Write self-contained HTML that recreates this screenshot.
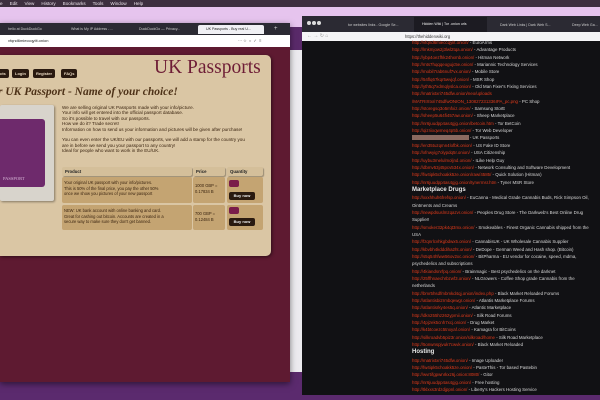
<!DOCTYPE html>
<html><head><meta charset="utf-8"><style>
*{margin:0;padding:0;box-sizing:border-box}
body{width:600px;height:400px;overflow:hidden;position:relative;background:#5a2a6a;font-family:"Liberation Sans",sans-serif}
.abs{position:absolute}
#menu{left:0;top:0;width:600px;height:7px;background:#3d2f3f;color:#e8e0e8;font-size:4.6px;line-height:7px;white-space:nowrap}
#menu span{margin-right:7px}
#lav{left:0;top:7px;width:600px;height:20px;background:#e6c4ee}
#wall{left:0;top:380px;width:600px;height:20px;background:#5b2a6e}
#mid{left:289px;top:50px;width:14px;height:322px;background:#ecebef}
#midp{left:289px;top:50px;width:14px;height:110px;background:#7b4aa2}
#lw{left:0;top:23px;width:290px;height:359px;background:#5e1a31;box-shadow:0 2px 6px rgba(0,0,0,.5)}
#ltabs{left:0;top:0;width:290px;height:12px;background:#2b2a33}
.tab{position:absolute;top:2px;height:9px;font-size:3.6px;color:#ccc;line-height:9px;padding-left:8px;white-space:nowrap;overflow:hidden}
#lurl{left:0;top:12px;width:290px;height:12px;background:#fff;font-size:4px;line-height:12px;padding-left:8px;color:#222}
#panel{left:0;top:32px;width:271px;height:201px;background:#dac6a4;border-radius:0 5px 5px 0;box-shadow:1px 1px 3px rgba(0,0,0,.5)}
.btn{position:absolute;top:14px;height:9px;background:#2a1a10;color:#e8d8c0;font-size:4px;font-weight:bold;line-height:9px;border-radius:2px;padding:0 3px}
#title{left:154px;top:2px;font-family:"Liberation Serif",serif;font-size:19.5px;color:#6e1d36;white-space:nowrap}
#h2{left:-2px;top:31px;font-family:"Liberation Serif",serif;font-style:italic;font-weight:bold;font-size:11.5px;color:#4e3218;white-space:nowrap}
#pp{left:0;top:50px;width:54px;height:96px;background:#d8d4cc;border-radius:2px;box-shadow:1px 1px 2px rgba(0,0,0,.4)}
#ppb{left:0;top:14px;width:45px;height:68px;background:#6e2a6c;border-radius:0 3px 3px 0}
.txt{font-size:4.6px;line-height:5.4px;color:#3a2410;white-space:nowrap}
.th{position:absolute;top:112px;height:9px;background:#d4bf9a;border-radius:2px;box-shadow:1px 1px 1px rgba(0,0,0,.3);font-size:4.3px;font-weight:bold;line-height:9px;padding-left:3px;color:#222}
.td{position:absolute;background:#c4a472;border-radius:2px;font-size:4.1px;line-height:5.5px;color:#3a2410;padding:3px 2px;white-space:nowrap;overflow:hidden}
.q{position:absolute;width:10px;height:7px;background:#7a1c4a;border-radius:2px}
.buy{position:absolute;width:26px;height:8px;background:#2a1a10;color:#eee;font-size:4px;font-weight:bold;line-height:8px;text-align:center;border-radius:2px}
#rw{left:302px;top:16px;width:298px;height:379px;background:#111114}
#rtabs{left:0;top:0;width:298px;height:16px;background:#2b2a33}
#rurl{left:0;top:16px;width:298px;height:9px;background:#f5f5f7}
#list{left:110px;top:23px;font-size:4.4px;line-height:7.35px;color:#d8d8d8;white-space:nowrap}
#list a{color:#e03a1a;text-decoration:none}
#list b{font-size:6px;color:#e8e8e8}
</style></head><body>
<div id="lav" class="abs"></div>
<div id="wall" class="abs"></div>
<div id="menu" class="abs"><span>e</span><span>Edit</span><span>View</span><span>History</span><span>Bookmarks</span><span>Tools</span><span>Window</span><span>Help</span></div>
<div id="midp" class="abs"></div><div id="mid" class="abs"></div>
<div id="lw" class="abs">
 <div id="ltabs" class="abs">
  <div class="tab" style="left:0;width:60px">hello at DuckDuckGo</div>
  <div class="tab" style="left:63px;width:60px">What is My IP Address - ...</div>
  <div class="tab" style="left:131px;width:60px">DuckDuckGo — Privacy...</div>
  <div class="tab" style="left:198px;width:66px;background:#f0f0f4;color:#222;border-radius:2px 2px 0 0">UK Passports - Buy real U...</div>
  <div class="tab" style="left:266px;color:#ddd;font-size:6px">+</div>
 </div>
 <div id="lurl" class="abs">vfqnd6mieccqyiit.onion<span style="position:absolute;left:238px;color:#444">··· ☆ &nbsp;○ &nbsp;✓ &nbsp;≡</span></div>
 <div id="panel" class="abs">
  <div class="btn" style="left:-3px">cts</div>
  <div class="btn" style="left:12px">Login</div>
  <div class="btn" style="left:33px">Register</div>
  <div class="btn" style="left:61px">FAQs</div>
  <div id="title" class="abs">UK Passports</div>
  <div id="h2" class="abs">r UK Passport - Name of your choice!</div>
  <div id="pp" class="abs"><div id="ppb" class="abs"><div style="position:absolute;left:3px;top:57px;font-size:4.5px;color:#d8b8d8;font-family:'Liberation Serif',serif">PASSPORT</div></div></div>
  <div class="abs txt" style="left:62px;top:50px">We are selling original UK Passports made with your info/picture.<br>Your info will get entered into the official passport database.<br>So it's possible to travel with our passports.<br>How we do it? Trade secret!<br>Information on how to send us your information and pictures will be given after purchase!<br><br>You can even enter the UK/EU with our passports, we will add a stamp for the country you<br>are in before we send you your passport to any country!<br>Ideal for people who want to work in the EU/UK.</div>
  <div class="th" style="left:62px;width:130px">Product</div>
  <div class="th" style="left:193px;width:32px">Price</div>
  <div class="th" style="left:227px;width:36px">Quantity</div>
  <div class="td" style="left:62px;top:122px;width:130px;height:26px">Your original UK passport with your info/pictures.<br>This is 50% of the final price, you pay the other 50%<br>once we show you pictures of your new passport</div>
  <div class="td" style="left:193px;top:122px;width:32px;height:26px;padding-top:6px">1000 GBP =<br>0.17834 B</div>
  <div class="td" style="left:227px;top:122px;width:36px;height:26px"></div>
  <div class="q" style="left:229px;top:125px"></div><div class="buy" style="left:229px;top:137px">Buy now</div>
  <div class="td" style="left:62px;top:150px;width:130px;height:25px">NEW: UK bank account with online banking and card.<br>Great for cashing out bitcoin. Accounts are created in a<br>secure way to make sure they don't get banned.</div>
  <div class="td" style="left:193px;top:150px;width:32px;height:25px;padding-top:6px">700 GBP =<br>0.12484 B</div>
  <div class="td" style="left:227px;top:150px;width:36px;height:25px"></div>
  <div class="q" style="left:229px;top:152px"></div><div class="buy" style="left:229px;top:163px">Buy now</div>
 </div>
</div>
<div id="rw" class="abs">
 <div id="rtabs" class="abs">
  <div style="position:absolute;left:5px;top:5px;width:4px;height:4px;border-radius:50%;background:#ddd;box-shadow:5px 0 #ddd,10px 0 #ddd"></div>
  <div class="tab" style="left:38px;top:3px;width:70px;height:13px;line-height:13px">tor websites links - Google Se...</div>
  <div class="tab" style="left:112px;top:1px;width:73px;height:15px;line-height:15px;background:#1c1b22;color:#eee">Hidden Wiki | Tor .onion urls</div>
  <div class="tab" style="left:190px;top:3px;width:68px;height:13px;line-height:13px">Dark Web Links | Dark Web S...</div>
  <div class="tab" style="left:262px;top:3px;width:40px;height:13px;line-height:13px">Deep Web Ga...</div>
 </div>
 <div id="rurl" class="abs"><span style="position:absolute;left:5px;top:0;font-size:5px;color:#999;line-height:9px">← → ↻ ⌂</span><span style="position:absolute;left:103px;font-size:4.2px;line-height:9px;color:#333">https://thehiddenwiki.org</span></div>
 <div id="list" class="abs">
<a>http://vfqnd6mieccqyiit.onion/</a> - EuroArms<br>
<a>http://lmkmjow2j3lwl2tqa.onion/</a> - Advantage Products<br>
<a>http://ybp4oezfhk24hxmb.onion/</a> - Hitman Network<br>
<a>http://mts7hqqqeogujc5e.onion/</a> - Mariannic Technology Services<br>
<a>http://mobil7rab6nuf7vx.onion/</a> - Mobile Store<br>
<a>http://54flq67kqr5wvjqf.onion/</a> - MSR Shop<br>
<a>http://yth5q7xdmqlyslca.onion/</a> - Old Man Fixer's Fixing Services<br>
<a>http://matrixtxri745dfw.onion/neo/uploads</a><br>
<a>/MATRIXtxri745dfwONION_130827231336IPA_pc.png</a> - PC Shop<br>
<a>http://storegsq3o5mfxiz.onion/</a> - Samsung StorE<br>
<a>http://sheep5u64fi457aw.onion/</a> - Sheep Marketplace<br>
<a>http://nr6juudpp4as4gjg.onion/betcoin.htm</a> - Tor BetCoin<br>
<a>http://qizriixqwmeq4p5b.onion/</a> - Tor Web Developer<br>
<span style="background:#8a6a60;color:#8a6a60">http://vfqnd6mieccqyiit.onion/</span> - UK Passports<br>
<a>http://en35tuzqmn4lofbk.onion/</a> - US Fake ID Store<br>
<a>http://xfnwyig7olypdq5r.onion/</a> - USA Citizenship<br>
<a>http://uybu3melulmoljnd.onion/</a> - ILike Help Guy<br>
<a>http://dbmv53j45pcv534x.onion/</a> - Network Consulting and Software Development<br>
<a>http://fw4ipk5choakk5ze.onion/raw/4585/</a> - Quick Solution (Hitman)<br>
<a>http://nr6juudpp4as4gjg.onion/tynermsr.htm</a> - Tyner MSR Store<br>
<b>Marketplace Drugs</b><br>
<a>http://xxxhhuh6frefsp.onion/</a> - EuCanna - Medical Grade Cannabis Buds, Rick Simpson Oil,<br>
Ointments and Creams<br>
<a>http://newpdsuslmzqazvr.onion/</a> - Peoples Drug Store - The Darkweb's Best Online Drug<br>
Supplier!<br>
<a>http://smoker32pk4qt3mx.onion/</a> - Smokeables - Finest Organic Cannabis shipped from the<br>
USA<br>
<a>http://fzqnrlcvhkgbdwx5.onion/</a> - CannabisUK - UK Wholesale Cannabis Supplier<br>
<a>http://kbvbh4kdddiha2ht.onion/</a> - DeDope - German Weed and Hash shop. (Bitcoin)<br>
<a>http://s5q54hfww56ov2xc.onion/</a> - BitPharma - EU vendor for cocaine, speed, mdma,<br>
psychedelics and subscriptions<br>
<a>http://4kiandsnrfpq.onion/</a> - Brainmagic - Best psychedelics on the darknet<br>
<a>http://25ffhnaechrbzwf3.onion/</a> - NLGrowers - Coffee Shop grade Cannabis from the<br>
netherlands<br>
<a>http://bmr5hsdfmbmkd4qj.onion/index.php</a> - Black Market Reloaded Forums<br>
<a>http://atlantisbi2rmbqewgr.onion/</a> - Atlantis Marketplace Forums<br>
<a>http://atlantisrky4es5q.onion/</a> - Atlantic Marketplace<br>
<a>http://dkn255hz262ypmii.onion/</a> - Silk Road Forums<br>
<a>http://4pjzek5cnh7xcj.onion/</a> - Drug Market<br>
<a>http://k4btcoezc5tnxyaf.onion/</a> - Kamagra for BitCoins<br>
<a>http://silkroadvb5piz3r.onion/silkroad/home</a> - Silk Road Marketplace<br>
<a>http://5onwnspjvuk7cwvk.onion/</a> - Black Market Reloaded<br>
<b>Hosting</b><br>
<a>http://matrixtxri745dfw.onion/</a> - Image Uploader<br>
<a>http://fw4ipk5choakk5ze.onion/</a> - PasteThis - Tor based Pastebin<br>
<a>http://wvrtifgpwnrkxz6j.onion:8080/</a> - Gitor<br>
<a>http://nr6juudpp4as4gjg.onion/</a> - Free hosting<br>
<a>http://tklxxs3rdzdjppnl.onion/</a> - Liberty's Hackers Hosting Service
 </div>
</div>
</body></html>
